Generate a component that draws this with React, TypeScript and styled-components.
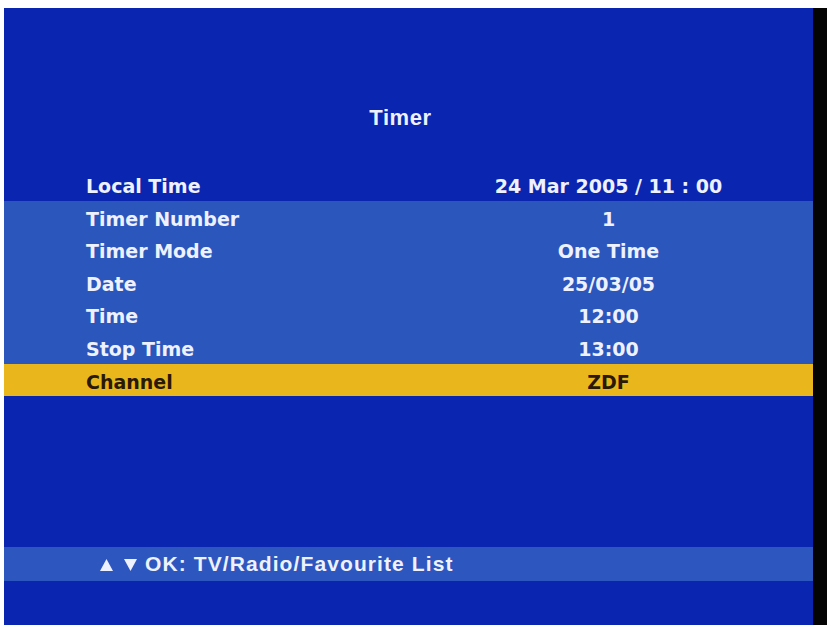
import styled, { createGlobalStyle } from 'styled-components'

const GlobalStyle = createGlobalStyle`
  html, body {
    margin: 0;
    padding: 0;
    background: #ffffff;
  }
  body {
    width: 832px;
    height: 629px;
    overflow: hidden;
  }
`

const Screen = styled.div`
  background-color: #0a25b0;
  border-right: 14px solid #040404;
  box-sizing: content-box;
  display: flex;
  flex-direction: column;
  height: 617px;
  margin: 8px 0 0 4px;
  width: 809px;
`

const Title = styled.h1`
  color: #eef1ff;
  font-family: 'Liberation Sans', Arial, sans-serif;
  font-size: 22px;
  font-weight: bold;
  letter-spacing: 0.6px;
  line-height: 30px;
  margin: 95px 0 0;
  padding-right: 16px;
  text-align: center;
`

const List = styled.div`
  display: flex;
  flex-direction: column;
  margin-top: 35px;
`

type Tone = 'plain' | 'band' | 'focus'

const rowBackground: Record<Tone, string> = {
  plain: 'transparent',
  band: '#2b56bb',
  focus: '#e9b71b',
}

const Row = styled.div<{ $tone: Tone }>`
  align-items: center;
  background-color: ${({ $tone }) => rowBackground[$tone]};
  box-sizing: border-box;
  color: ${({ $tone }) => ($tone === 'focus' ? '#2a1906' : '#eef1ff')};
  display: grid;
  font-family: 'DejaVu Sans', Verdana, sans-serif;
  font-size: 19px;
  font-weight: bold;
  grid-template-columns: 318px 1fr;
  height: 32.6px;
  line-height: 30px;
  padding-left: 82px;
  padding-top: 3px;
`

const Label = styled.span`
  white-space: nowrap;
`

const Value = styled.span`
  text-align: center;
  white-space: nowrap;
`

const Footer = styled.div`
  align-items: center;
  background-color: #2d57be;
  box-sizing: border-box;
  color: #eef1ff;
  display: flex;
  height: 34px;
  margin: auto 0 44px;
  padding-left: 96px;
`

const Arrows = styled.span`
  align-items: center;
  display: flex;
  gap: 11px;
  margin-right: 8px;
  padding-top: 2px;
`

const Hint = styled.span`
  font-family: 'Liberation Sans', Arial, sans-serif;
  font-size: 21px;
  font-weight: bold;
  letter-spacing: 1.1px;
  line-height: 34px;
  white-space: nowrap;
`

const Triangle = ({ down }: { down?: boolean }) => (
  <svg width="13" height="12" viewBox="0 0 13 12" aria-hidden="true">
    <polygon
      points={down ? '0,0 13,0 6.5,12' : '6.5,0 13,12 0,12'}
      fill="#eef1ff"
    />
  </svg>
)

const rows: { label: string; value: string; tone: Tone }[] = [
  { label: 'Local Time', value: '24 Mar 2005 / 11 : 00', tone: 'plain' },
  { label: 'Timer Number', value: '1', tone: 'band' },
  { label: 'Timer Mode', value: 'One Time', tone: 'band' },
  { label: 'Date', value: '25/03/05', tone: 'band' },
  { label: 'Time', value: '12:00', tone: 'band' },
  { label: 'Stop Time', value: '13:00', tone: 'band' },
  { label: 'Channel', value: 'ZDF', tone: 'focus' },
]

export default function App() {
  return (
    <>
      <GlobalStyle />
      <Screen>
        <Title>Timer</Title>
        <List>
          {rows.map((row) => (
            <Row key={row.label} $tone={row.tone}>
              <Label>{row.label}</Label>
              <Value>{row.value}</Value>
            </Row>
          ))}
        </List>
        <Footer>
          <Arrows>
            <Triangle />
            <Triangle down />
          </Arrows>
          <Hint>OK: TV/Radio/Favourite List</Hint>
        </Footer>
      </Screen>
    </>
  )
}
